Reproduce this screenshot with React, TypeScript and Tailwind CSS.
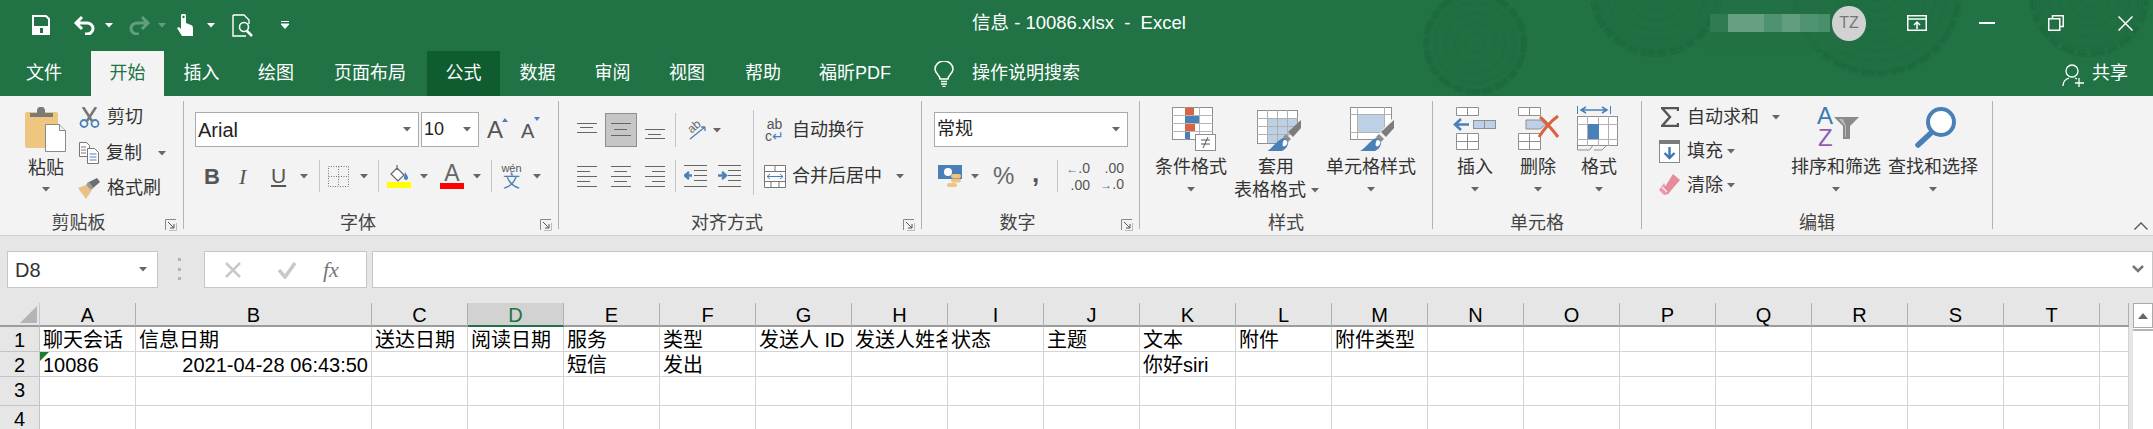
import React from "react";

const UI = "font-['Liberation_Sans','Noto_Sans_CJK_SC',sans-serif]";

function Caret({ className = "" }: { className?: string }) {
  return (
    <svg width="8" height="5" viewBox="0 0 8 5" className={`shrink-0 ${className}`}>
      <path d="M0 0h8L4 4.5z" fill="#666" />
    </svg>
  );
}

function Sep({ className = "" }: { className?: string }) {
  return <div className={`w-px self-stretch bg-[#c6c6c6] shrink-0 ${className}`} />;
}

function Launcher() {
  return (
    <svg width="12" height="12" viewBox="0 0 12 12" className="absolute right-[6px] top-[10px]">
      <path d="M.5 11V.5H11" fill="none" stroke="#888" />
      <path d="M3 3l6 6M9 5v4H5" fill="none" stroke="#555" />
      <path d="M4 11.5h7.5V4" fill="none" stroke="#bbb" />
    </svg>
  );
}

function Group({ w, label, launcher, children }: { w: string; label: string; launcher?: boolean; children: React.ReactNode }) {
  return (
    <div className={`${w} h-[128px] shrink-0 flex flex-col border-r border-[#b4b4b4]`}>
      <div className="h-[108px] flex flex-col">{children}</div>
      <div className={`relative h-[20px] leading-[28px] text-center text-[18px] text-[#444] ${launcher ? "pr-[26px]" : ""}`}>
        {label}
        {launcher && <Launcher />}
      </div>
    </div>
  );
}

function Select({ w, text, size, ml }: { w: string; text: string; size: string; ml: string }) {
  return (
    <div className={`${w} ${ml} h-[35px] bg-white border border-[#ababab] flex items-center justify-between pl-[2px] pr-[7px] shrink-0 ${size} text-[#222]`}>
      <span>{text}</span>
      <Caret />
    </div>
  );
}

function BigBtn({ w, ml = "", icon, lines, iw = "" }: { w: string; ml?: string; icon: React.ReactNode; lines: React.ReactNode; iw?: string }) {
  return (
    <div className={`${w} ${ml} shrink-0 flex flex-col items-center text-[18px] leading-[18px] text-[#333] whitespace-nowrap`}>
      <div className={`mt-[6px] h-[46px] flex items-start justify-center ${iw}`}>{icon}</div>
      <div className="mt-[5px]">{lines}</div>
      <Caret className="mt-[11px]" />
    </div>
  );
}

function Rings({ cx, cy, r }: { cx: number; cy: number; r: number }) {
  const rs = Array.from({ length: Math.floor(r / 5) }, (_, i) => (i + 1) * 5);
  return (
    <g fill="none">
      <circle cx={cx} cy={cy} r={r - 4} fill="#1f6f43" stroke="#1e6a3f" strokeWidth="6" strokeDasharray="9 3 14 4" />
      {rs.map((x) => (
        <circle key={x} cx={cx} cy={cy} r={x} stroke={x % 10 === 0 ? "#1e6b40" : "#207145"} strokeWidth="1" />
      ))}
    </g>
  );
}

function Watermark() {
  return (
    <svg width="2153" height="96" viewBox="0 0 2153 96" className="absolute left-0 top-0">
      <Rings cx={1475} cy={43} r={53} />
      <Rings cx={1656} cy={-10} r={68} />
      <Rings cx={1877} cy={-9} r={87} />
      <Rings cx={2089} cy={-3} r={60} />
      <path d="M1710 0h120l25 22v28h-40l-5 4h-100z" fill="#236f45" opacity="0.6" />
    </svg>
  );
}

function Save() {
  return (
    <svg width="18" height="20" viewBox="0 0 18 20" className="shrink-0">
      <path d="M1 1h13l3 3v15H1z" fill="none" stroke="#fff" strokeWidth="2" />
      <rect x="1" y="11" width="16" height="8" fill="#fff" />
      <rect x="8" y="13" width="3" height="5" fill="#217346" />
    </svg>
  );
}
function Undo() {
  return (
    <svg width="23" height="20" viewBox="0 0 23 20" className="shrink-0">
      <path d="M9 2L3 8l6 6M3 8h11a6 5.5 0 0 1 0 11h-2" fill="none" stroke="#fff" strokeWidth="3" />
    </svg>
  );
}
function Redo() {
  return (
    <svg width="23" height="20" viewBox="0 0 23 20" className="shrink-0 opacity-30">
      <path d="M14 2l6 6-6 6M20 8H9a6 5.5 0 0 0 0 11h2" fill="none" stroke="#fff" strokeWidth="3" />
    </svg>
  );
}
function Touch() {
  return (
    <svg width="16" height="22" viewBox="0 0 16 22" className="shrink-0">
      <path d="M4 2a2.5 2.5 0 0 1 5 0v7l5 2c1.500.600 2 2 2 3v8H5L0 14l2-1 2 2z" fill="#fff" />
      <circle cx="6.500" cy="3" r="1.200" fill="#217346" />
    </svg>
  );
}
function Preview() {
  return (
    <svg width="22" height="23" viewBox="0 0 22 23" className="shrink-0">
      <path d="M1 1h11l5 5v4M1 1v21h13" fill="none" stroke="#fff" strokeWidth="1.400" />
      <circle cx="12" cy="13" r="4.500" fill="none" stroke="#fff" strokeWidth="1.600" />
      <path d="M15 17l5 5" stroke="#fff" strokeWidth="2.500" />
    </svg>
  );
}

function Paste() {
  return (
    <svg width="42" height="46" viewBox="0 0 42 46">
      <rect x="0" y="5" width="33" height="36" rx="2" fill="#eec680" />
      <path d="M5 10V6h7V3a3.500 3.500 0 0 1 4 -3h0a3.500 3.500 0 0 1 4 3v3h8v4z" fill="#7a7a7a" />
      <path d="M20.500 17.500h14l6 6v21h-20z" fill="#fff" stroke="#8a8a8a" />
      <path d="M34.500 17.500v6h6" fill="#eee" stroke="#8a8a8a" />
    </svg>
  );
}
function Scissors() {
  return (
    <svg width="21" height="21" viewBox="0 0 21 21" className="shrink-0">
      <path d="M4 0l9 14M17 0L8 14" stroke="#777" strokeWidth="2.600" fill="none" />
      <circle cx="5" cy="16.500" r="3.500" fill="none" stroke="#4a80b8" strokeWidth="1.800" />
      <circle cx="16" cy="16.500" r="3.500" fill="none" stroke="#4a80b8" strokeWidth="1.800" />
    </svg>
  );
}
function Copy() {
  return (
    <svg width="21" height="22" viewBox="0 0 21 22" className="shrink-0">
      <path d="M.5.5h7l3 3v11H.5z" fill="#fff" stroke="#777" />
      <path d="M8.500 6.500h7l4 4v11h-11z" fill="#fff" stroke="#777" />
      <path d="M2 5h5M2 8h5M2 11h5" stroke="#777" />
      <path d="M10.500 12h7M10.500 15h7M10.500 18h7" stroke="#4a80b8" />
    </svg>
  );
}
function Brush() {
  return (
    <svg width="24" height="21" viewBox="0 0 24 21" className="shrink-0">
      <path d="M0 10l8-3 6 5-6 9z" fill="#e8c088" />
      <path d="M9 5l5 6 8-7-3-4z" fill="#6e6e6e" />
      <path d="M8 7l3-3 4 5-2 3z" fill="#9a9a9a" />
    </svg>
  );
}
function Borders() {
  return (
    <svg width="21" height="21" viewBox="0 0 21 21" className="shrink-0">
      <path d="M.5.5h20v20H.5zM10.500.5v20M.5 10.500h20" fill="none" stroke="#777" strokeDasharray="1 1.500" />
    </svg>
  );
}
function Bucket() {
  return (
    <div className="w-[24px] shrink-0 flex flex-col items-center">
      <svg width="20" height="18" viewBox="0 0 20 18">
        <path d="M8 1v5M8 4l7 7-6 6-7-7z" fill="#fff" stroke="#666" strokeWidth="1.200" />
        <path d="M16 8c2 3 3 4 3 6a2 2 0 0 1-4 0c0-2 .500-3 1-6z" fill="#4a80b8" />
      </svg>
      <div className="w-[24px] h-[6px] bg-[#ffff00]" />
    </div>
  );
}
function HLines({ widths, ys, h = 24, x = [] }: { widths?: number[]; ys: number[]; h?: number; x?: number[] }) {
  return (
    <svg width="20" height={h} viewBox={`0 0 20 ${h}`} className="shrink-0">
      {ys.map((y, i) => (
        <path key={y} d={`M${x[i] ?? 0} ${y + 0.5}H${(x[i] ?? 0) + (widths ? widths[i] : 20)}`} stroke="#666" />
      ))}
    </svg>
  );
}
function Orient() {
  return (
    <svg width="21" height="23" viewBox="0 0 21 23" className="shrink-0 overflow-visible">
      <text x="3" y="12" fontSize="12" fill="#666" transform="rotate(-40 8 10)" fontFamily="Liberation Sans">ab</text>
      <path d="M4 20L19 8M19 8h-4M19 8v4" fill="none" stroke="#4a80b8" strokeWidth="1.300" />
    </svg>
  );
}
function Indent({ inc }: { inc?: boolean }) {
  return (
    <svg width="23" height="23" viewBox="0 0 23 23" className="shrink-0">
      <path d="M0 .5h23M10 5.500h13M10 10.500h13M10 15.500h13M0 21.500h23" stroke="#666" />
      {inc ? (
        <path d="M0 10.500h6M4 7l4 3.500L4 14" fill="none" stroke="#4a80b8" strokeWidth="2.400" />
      ) : (
        <path d="M8 10.500H2M5 7L1 10.500 5 14" fill="none" stroke="#4a80b8" strokeWidth="2.400" />
      )}
    </svg>
  );
}
function Merge() {
  return (
    <svg width="22" height="23" viewBox="0 0 22 23" className="shrink-0">
      <path d="M.5.5h21v22H.5zM.5 6.500h21M.5 16.500h21M11 .5v6M7 16.500v6M15 16.500v6" fill="#fff" stroke="#777" />
      <path d="M3 11.500h16M6 9l-3 2.500L6 14M16 9l3 2.500L16 14" fill="none" stroke="#4a80b8" />
    </svg>
  );
}
function Money() {
  return (
    <svg width="24" height="23" viewBox="0 0 24 23" className="shrink-0">
      <rect x="0" y="0" width="24" height="14" fill="#4a80b8" />
      <circle cx="10" cy="7" r="4" fill="#fff" />
      <rect x="13" y="9" width="10" height="4" rx="2" fill="#eec680" />
      <rect x="13" y="13.500" width="10" height="4" rx="2" fill="#eec680" />
      <rect x="9" y="18" width="10" height="4" rx="2" fill="#eec680" />
    </svg>
  );
}
function DecBox({ up, down, arrowTop, arrowBottom }: { up: string; down: string; arrowTop?: boolean; arrowBottom?: boolean }) {
  return (
    <div className="w-[23px] shrink-0 flex flex-col items-end text-[14px] leading-[16px] text-[#555] whitespace-nowrap">
      <span>
        {arrowTop && <span className="text-[#3d78b4] font-bold text-[12px]">←</span>}
        {up}
      </span>
      <span>
        {arrowBottom && <span className="text-[#3d78b4] font-bold text-[12px]">→</span>}
        {down}
      </span>
    </div>
  );
}
function CondFmt() {
  return (
    <svg width="45" height="45" viewBox="0 0 45 45">
      <rect x=".5" y=".5" width="40" height="32" fill="#fff" stroke="#8f8f8f" />
      <path d="M13.500 0v33M27.500 0v33M0 8.500h41M0 16.500h41M0 24.500h41" stroke="#b5b5b5" />
      <rect x="13" y="1" width="9" height="7" fill="#db6242" />
      <rect x="13" y="9" width="14" height="7" fill="#4a80b8" />
      <rect x="13" y="17" width="10" height="7" fill="#db6242" />
      <rect x="13" y="25" width="5" height="7" fill="#4a80b8" />
      <rect x="23.500" y="27.500" width="20" height="16" fill="#fff" stroke="#8f8f8f" />
      <path d="M29 33h9M29 37h9M36 30l-5 11" stroke="#555" fill="none" />
    </svg>
  );
}
function BrushTip() {
  return (
    <g>
      <path d="M44 10v8l-8 9-5-5z" fill="#7c7c7c" />
      <path d="M29 24l5 5-3 3-5-5z" fill="#8f8f8f" />
      <path d="M26 28c3 0 6 3 5 6-1 4-4 6-6 7H10c5-2 9-10 16-13z" fill="#4a80b8" />
      <path d="M27 30c3 0 4 2 3 4s-3 3-4 2 0-5 1-6z" fill="#fff" />
    </g>
  );
}
function TableFmt() {
  return (
    <svg width="45" height="42" viewBox="0 0 45 42">
      <rect x=".5" y=".5" width="40" height="33" fill="#fff" stroke="#8f8f8f" />
      <rect x="10" y="8" width="30" height="25" fill="#bdd0e6" />
      <path d="M10.500 0v33M20.500 0v33M30.500 0v33M0 8.500h41M0 16.500h41M0 24.500h41" stroke="#b0b0b0" />
      <path d="M46 9L26 33 22 42H46z" fill="#f3f3f3" />
      <BrushTip />
    </svg>
  );
}
function CellFmt() {
  return (
    <svg width="45" height="45" viewBox="0 0 45 45">
      <rect x=".5" y=".5" width="41" height="32" fill="#fff" stroke="#8f8f8f" />
      <rect x="8" y="8" width="26" height="17" fill="#bdd0e6" />
      <path d="M7.500 0v33M34.500 0v33M0 7.500h41M0 25.500h41" stroke="#b0b0b0" />
      <path d="M46 7L26 30 20 45H46z" fill="#f3f3f3" />
      <g transform="translate(0 3)"><BrushTip /></g>
    </svg>
  );
}
function InsertCell() {
  return (
    <svg width="44" height="44" viewBox="0 0 44 44">
      <path d="M3.500.5h22v8h-22zM14.500.5v8M3.500 26.500h22v16h-22zM14.500 26.500v16M3.500 34.500h22" fill="#fff" stroke="#8f8f8f" />
      <rect x="20.500" y="13.500" width="22" height="8" fill="#bdd0e6" stroke="#8f8f8f" />
      <path d="M31.500 13.500v8" stroke="#8f8f8f" />
      <path d="M16 17.500H3M8 12l-6 5.500L8 23" fill="none" stroke="#4a80b8" strokeWidth="2.600" />
    </svg>
  );
}
function DeleteCell() {
  return (
    <svg width="44" height="44" viewBox="0 0 44 44">
      <path d="M2.500.5h22v8h-22zM13.500.5v8M2.500 26.500h22v16h-22zM13.500 26.500v16M2.500 34.500h22" fill="#fff" stroke="#8f8f8f" />
      <path d="M10 13h14l6 4.500-6 4.500H10z" fill="#bdd0e6" stroke="#8f8f8f" />
      <path d="M23 30C28 22 34 15 42 9M24 10c7 6 12 12 18 20" fill="none" stroke="#db6242" strokeWidth="3" />
    </svg>
  );
}
function FormatCell() {
  return (
    <svg width="44" height="47" viewBox="0 0 44 47" className="-mt-[1px]">
      <path d="M.5 0v8M33.500 0v8" stroke="#4a80b8" />
      <path d="M4 4h26M9 1L4 4l5 3M25 1l5 3-5 3" fill="none" stroke="#4a80b8" strokeWidth="1.500" />
      <rect x=".5" y="10.500" width="40" height="29" fill="#fff" stroke="#8f8f8f" />
      <path d="M10.500 10v30M21.500 10v30M31.500 10v30M0 18.500h41M0 33.500h41" stroke="#b0b0b0" />
      <rect x="11" y="18" width="11" height="15" fill="#4a80b8" />
      <path d="M.5 40v4h12l3-4M17 44h8l4-4" fill="none" stroke="#8f8f8f" />
    </svg>
  );
}
function Sigma() {
  return (
    <svg width="18" height="20" viewBox="0 0 18 20" className="shrink-0">
      <path d="M17 4V1H1l8 9-8 9h16v-3" fill="none" stroke="#555" strokeWidth="2.400" />
    </svg>
  );
}
function FillIcon() {
  return (
    <svg width="21" height="23" viewBox="0 0 21 23" className="shrink-0">
      <rect x=".5" y=".5" width="20" height="22" fill="#fff" stroke="#8a8a8a" />
      <rect x="0" y="0" width="21" height="4" fill="#7c7c7c" />
      <path d="M10.500 7v11M5.500 13l5 5 5-5" fill="none" stroke="#3d78b4" strokeWidth="2.400" />
    </svg>
  );
}
function Eraser() {
  return (
    <svg width="21" height="22" viewBox="0 0 21 22" className="shrink-0">
      <path d="M14 0l7 6-12 14-5-4z" fill="#e78a9c" />
      <path d="M5 9L0 16l5 5 5-1z" fill="#e78a9c" opacity=".85" />
      <path d="M3 13l5 5" stroke="#f3f3f3" strokeWidth="1.300" />
    </svg>
  );
}
function SortIcon() {
  return (
    <svg width="43" height="40" viewBox="0 0 43 40" className="overflow-visible">
      <text x="1" y="17" fontSize="24" fill="#3d78b4" fontFamily="Liberation Sans">A</text>
      <text x="2" y="39" fontSize="24" fill="#8e5fb5" fontFamily="Liberation Sans">Z</text>
      <path d="M18 10h25l-9 9v13h-7V19z" fill="#8a8a8a" />
      <path d="M23 12h4l3 7v11h-1V19z" fill="#bbb" />
    </svg>
  );
}
function Finder() {
  return (
    <svg width="42" height="41" viewBox="0 0 42 41">
      <circle cx="26" cy="15" r="13" fill="#fff" stroke="#4a80b8" strokeWidth="4" />
      <path d="M16 26L3 38" stroke="#4a80b8" strokeWidth="5.500" strokeLinecap="round" />
    </svg>
  );
}

const COLS = ["A","B","C","D","E","F","G","H","I","J","K","L","M","N","O","P","Q","R","S","T",""];
const RH = ["h-[25px]", "h-[25px]", "h-[29px]", "h-[29px]"];
const DATA: Record<string, string>[] = [
  { A:"聊天会话", B:"信息日期", C:"送达日期", D:"阅读日期", E:"服务", F:"类型", G:"发送人 ID", H:"发送人姓名", I:"状态", J:"主题", K:"文本", L:"附件", M:"附件类型" },
  { A:"10086", B:"2021-04-28 06:43:50", E:"短信", F:"发出", K:"你好siri" },
  {},
  {},
];

function Sheet() {
  return (
    <div className="grid grid-cols-[40px_96px_236px_repeat(18,96px)_29px] flex-1 text-[20px] text-black">
      <div className="h-[24px] bg-[#e6e6e6] border-b-2 border-[#9c9c9c] flex items-end justify-end border-r border-r-[#c8c8c8]">
        <svg width="17" height="17" viewBox="0 0 17 17" className="mb-[2px] mr-[2px]"><path d="M17 0v17H0z" fill="#b4b4b4" /></svg>
      </div>
      {COLS.map((c) =>
        c === "D" ? (
          <div key="D" className="h-[24px] bg-[#d2d2d2] border-b-2 border-[#217346] text-[#217346] text-center leading-[24px] border-r border-r-[#b0b0b0]">{c}</div>
        ) : (
          <div key={c || "end"} className="h-[24px] bg-[#e6e6e6] border-b-2 border-[#9c9c9c] text-center leading-[24px] border-r border-r-[#b0b0b0]">{c}</div>
        )
      )}
      {DATA.map((row, r) => (
        <React.Fragment key={r}>
          <div className={`${RH[r]} bg-[#e6e6e6] text-center border-b border-r border-[#c4c4c4] leading-[27px]`}>{r + 1}</div>
          {COLS.map((c) => (
            <div
              key={c || "end"}
              className={`${RH[r]} relative bg-white border-b border-r border-[#d4d4d4] overflow-hidden whitespace-nowrap leading-[27px] px-[3px] ${c === "B" && r === 1 ? "text-right" : ""}`}
            >
              {c === "A" && r === 1 && (
                <svg width="9" height="9" viewBox="0 0 9 9" className="absolute left-0 top-0"><path d="M0 0h9L0 9z" fill="#1e7a2e" /></svg>
              )}
              {row[c] ?? ""}
            </div>
          ))}
        </React.Fragment>
      ))}
    </div>
  );
}

export default function App() {
  return (
    <div className={`w-[2153px] h-[429px] overflow-hidden bg-[#e6e6e6] ${UI}`}>
      <header className="relative h-[96px] bg-[#217346] text-white">
        <Watermark />
        <div className="relative h-[51px] pb-[5px] flex items-center text-[18px] pr-[20px]">
          <div className="flex items-center h-[30px] mt-[4px]">
            <div className="ml-[32px]"><Save /></div>
            <div className="ml-[23px]"><Undo /></div>
            <Caret className="ml-[9px] [&>path]:fill-white" />
            <div className="ml-[15px]"><Redo /></div>
            <Caret className="ml-[7px] opacity-30 [&>path]:fill-white" />
            <div className="ml-[11px]"><Touch /></div>
            <Caret className="ml-[14px] [&>path]:fill-white" />
            <div className="ml-[17px]"><Preview /></div>
            <svg width="8" height="8" viewBox="0 0 8 8" className="ml-[27px] shrink-0"><path d="M0 .5h8M0 3h8L4 7.500z" stroke="#fff" fill="#fff" strokeWidth="1" /></svg>
          </div>
          <div className="ml-[683px] whitespace-pre text-[18.5px]">信息 - 10086.xlsx  -  Excel</div>
          <div className="ml-auto flex items-center">
            <div className="flex h-[18px]">
              <div className="w-[18px] bg-[#2f7c53]" />
              <div className="w-[36px] bg-[#66a081]" />
              <div className="w-[18px] bg-[#4f9270]" />
              <div className="w-[18px] bg-[#629d7e]" />
              <div className="w-[18px] bg-[#4f9370]" />
              <div className="w-[12px] bg-[#4a8f6c]" />
            </div>
            <div className="w-[34px] h-[35px] rounded-full bg-[#d2d2d2] ml-[2px] text-[#777] text-[16px] flex items-center justify-center">TZ</div>
            <svg width="20" height="16" viewBox="0 0 20 16" className="ml-[41px] shrink-0">
              <path d="M.75.75h18.500v14.500H.75zM0 4h20" fill="none" stroke="#fff" strokeWidth="1.500" />
              <path d="M10 14V7M7 10l3-3 3 3" fill="none" stroke="#fff" strokeWidth="1.500" />
            </svg>
            <div className="ml-[52px] w-[16px] h-[2px] bg-white" />
            <svg width="16" height="16" viewBox="0 0 16 16" className="ml-[53px] shrink-0">
              <path d="M4.500 3V.75h10.750V11.500H12" fill="none" stroke="#fff" strokeWidth="1.500" />
              <rect x=".75" y="3.750" width="11" height="11.500" fill="none" stroke="#fff" strokeWidth="1.500" />
            </svg>
            <svg width="15" height="15" viewBox="0 0 15 15" className="ml-[54px] shrink-0">
              <path d="M.5.5l14 14M14.500.5l-14 14" stroke="#fff" strokeWidth="1.500" />
            </svg>
          </div>
        </div>
        <nav className="relative h-[45px] flex items-center text-[18px] pr-[25px]">
          <div className="ml-[7px] w-[74px] text-center">文件</div>
          <div className="ml-[10px] w-[73px] h-full bg-[#f3f3f3] text-[#217346] flex items-center justify-center">开始</div>
          <div className="w-[75px] text-center">插入</div>
          <div className="w-[74px] text-center">绘图</div>
          <div className="ml-[2px] w-[110px] text-center">页面布局</div>
          <div className="ml-[2px] w-[73px] h-full bg-[#0e5c2f] flex items-center justify-center">公式</div>
          <div className="w-[75px] text-center">数据</div>
          <div className="w-[75px] text-center">审阅</div>
          <div className="w-[74px] text-center">视图</div>
          <div className="ml-[2px] w-[74px] text-center">帮助</div>
          <div className="w-[110px] text-center">福昕PDF</div>
          <svg width="20" height="26" viewBox="0 0 20 26" className="ml-[24px] shrink-0">
            <path d="M6 18c0-4-5-5-5-10a9 8 0 0 1 18 0c0 5-5 6-5 10z" fill="none" stroke="#fff" strokeWidth="1.500" />
            <path d="M7 20.500h6M7 23h6M8.500 25.500h3" stroke="#fff" strokeWidth="1.500" />
          </svg>
          <div className="ml-[18px]">操作说明搜索</div>
          <div className="ml-auto flex items-center">
            <svg width="23" height="24" viewBox="0 0 23 24" className="shrink-0 mt-[5px]">
              <circle cx="10" cy="7" r="6" fill="none" stroke="#fff" strokeWidth="1.300" />
              <path d="M1 22c0-5 3-7 6-8M13 14l2 1M17 14v9M13 19h9" fill="none" stroke="#fff" strokeWidth="1.300" />
            </svg>
            <div className="ml-[7px]">共享</div>
          </div>
        </nav>
      </header>

      <section className="relative h-[140px] bg-[#f3f3f3] border-b border-[#d0d0d0] pt-[5px] flex text-[18px] text-[#333]">
        <Group w="w-[184px]" label="剪贴板" launcher>
          <div className="flex leading-[18px]">
            <div className="ml-[24px] w-[44px] flex flex-col items-center">
              <div className="mt-[6px] h-[46px]"><Paste /></div>
              <div className="mt-[6px]">粘贴</div>
              <Caret className="mt-[10px]" />
            </div>
            <div className="ml-[11px] flex flex-col">
              <div className="h-[32px] flex items-center"><Scissors /><span className="ml-[7px]">剪切</span></div>
              <div className="h-[40px] flex items-center"><Copy /><span className="ml-[6px]">复制</span><Caret className="ml-[16px]" /></div>
              <div className="h-[30px] flex items-center -ml-[1px]"><Brush /><span className="ml-[5px]">格式刷</span></div>
            </div>
          </div>
        </Group>

        <Group w="w-[375px]" label="字体" launcher>
          <div className="mt-[11px] h-[35px] flex items-center">
            <Select ml="ml-[11px]" w="w-[224px]" text="Arial" size="text-[20px]" />
            <Select ml="ml-[2px]" w="w-[58px]" text="10" size="text-[18px]" />
            <div className="ml-[8px] w-[20px] flex items-start text-[#555]">
              <span className="text-[24px] leading-[24px]">A</span>
              <svg width="6" height="4" viewBox="0 0 6 4" className="-ml-[1px] shrink-0"><path d="M3 0l3 4H0z" fill="#4a80b8" /></svg>
            </div>
            <div className="ml-[14px] w-[20px] flex items-start text-[#555]">
              <span className="text-[20px] leading-[24px] mt-[2px]">A</span>
              <svg width="6" height="4" viewBox="0 0 6 4" className="shrink-0"><path d="M0 0h6L3 4z" fill="#4a80b8" /></svg>
            </div>
          </div>
          <div className="mt-[13px] h-[32px] flex items-center text-[#555]">
            <span className="ml-[20px] w-[14px] text-[22px] font-bold">B</span>
            <span className="ml-[21px] w-[11px] text-[22px] italic font-['Liberation_Serif',serif]">I</span>
            <span className="ml-[21px] w-[15px] text-[21px] underline underline-offset-2">U</span>
            <Caret className="ml-[14px]" />
            <Sep className="ml-[11px]" />
            <div className="ml-[8px]"><Borders /></div>
            <Caret className="ml-[11px]" />
            <Sep className="ml-[10px]" />
            <div className="ml-[8px]"><Bucket /></div>
            <Caret className="ml-[9px]" />
            <div className="ml-[12px] w-[24px] flex flex-col items-center text-[#666]">
              <span className="text-[23px] leading-[19px]">A</span>
              <div className="w-[24px] h-[6px] bg-[#ff0000]" />
            </div>
            <Caret className="ml-[9px]" />
            <Sep className="ml-[10px]" />
            <div className="ml-[9px] w-[21px] flex flex-col items-center">
              <span className="text-[11px] leading-[10px] text-[#555]">wén</span>
              <span className="text-[17px] leading-[17px] text-[#4a80b8]">文</span>
            </div>
            <Caret className="ml-[11px]" />
          </div>
        </Group>

        <Group w="w-[363px]" label="对齐方式" launcher>
          <div className="flex">
            <div className="w-[194px] shrink-0">
              <div className="mt-[12px] h-[34px] flex items-center">
                <div className="ml-[18px]"><HLines ys={[5,9,14]} h={24} widths={[20,13,20]} x={[0,3,0]} /></div>
                <div className="ml-[8px] w-[32px] h-[34px] bg-[#c6c6c6] border border-[#8f8f8f] flex items-center justify-center"><HLines ys={[5,11,17]} h={24} widths={[20,13,20]} x={[0,3,0]} /></div>
                <div className="ml-[8px]"><HLines ys={[11,16,20]} h={24} widths={[20,13,20]} x={[0,3,0]} /></div>
                <Sep className="ml-[10px]" />
                <div className="ml-[10px]"><Orient /></div>
                <Caret className="ml-[6px]" />
              </div>
              <div className="mt-[13px] h-[32px] flex items-center">
                <div className="ml-[18px]"><HLines ys={[1,6,11,16,21]} h={23} widths={[20,13,20,13,20]} /></div>
                <div className="ml-[14px]"><HLines ys={[1,6,11,16,21]} h={23} widths={[20,13,20,13,20]} x={[0,3,0,3,0]} /></div>
                <div className="ml-[14px]"><HLines ys={[1,6,11,16,21]} h={23} widths={[20,13,20,13,20]} x={[0,7,0,7,0]} /></div>
                <Sep className="ml-[10px]" />
                <div className="ml-[8px]"><Indent /></div>
                <div className="ml-[11px]"><Indent inc /></div>
              </div>
            </div>
            <Sep className="mt-[9px] h-[85px] self-start" />
            <div className="flex-1">
              <div className="mt-[12px] h-[34px] flex items-center">
                <div className="ml-[12px] w-[17px] flex flex-col items-center text-[14px] leading-[12px] text-[#555]">
                  <span>ab</span>
                  <span>c<span className="text-[#4a80b8]">↵</span></span>
                </div>
                <span className="ml-[9px]">自动换行</span>
              </div>
              <div className="mt-[13px] h-[32px] flex items-center">
                <div className="ml-[10px]"><Merge /></div>
                <span className="ml-[6px]">合并后居中</span>
                <Caret className="ml-[14px]" />
              </div>
            </div>
          </div>
        </Group>

        <Group w="w-[218px]" label="数字" launcher>
          <div className="mt-[11px] h-[35px] flex items-center">
            <Select ml="ml-[12px]" w="w-[194px]" text="常规" size="text-[18px]" />
          </div>
          <div className="mt-[13px] h-[32px] flex items-center">
            <div className="ml-[16px]"><Money /></div>
            <Caret className="ml-[9px]" />
            <span className="ml-[14px] w-[19px] text-[24px] text-[#666] leading-none">%</span>
            <span className="ml-[20px] w-[9px] text-[26px] font-bold text-[#555] leading-none -mt-[6px]">,</span>
            <Sep className="ml-[16px]" />
            <div className="ml-[9px]"><DecBox up=".0" down=".00" arrowTop /></div>
            <div className="ml-[11px]"><DecBox up=".00" down=".0" arrowBottom /></div>
          </div>
        </Group>

        <Group w="w-[293px]" label="样式">
          <div className="flex">
            <BigBtn ml="ml-[15px]" w="w-[72px]" iw="pl-[6px]" icon={<CondFmt />} lines="条件格式" />
            <div className="ml-[7px] w-[85px] shrink-0 flex flex-col text-[18px] leading-[18px] text-[#333] whitespace-nowrap">
              <div className="mt-[9px] h-[43px] pl-[23px]"><TableFmt /></div>
              <div className="mt-[5px] pl-[24px]">套用</div>
              <div className="mt-[5px] flex items-center">表格格式<Caret className="ml-[5px]" /></div>
            </div>
            <BigBtn ml="ml-[7px]" w="w-[90px]" iw="pl-[2px]" icon={<CellFmt />} lines="单元格样式" />
          </div>
        </Group>

        <Group w="w-[209px]" label="单元格">
          <div className="flex">
            <BigBtn ml="ml-[20px]" w="w-[44px]" icon={<InsertCell />} lines="插入" />
            <BigBtn ml="ml-[19px]" w="w-[44px]" icon={<DeleteCell />} lines="删除" />
            <BigBtn ml="ml-[17px]" w="w-[44px]" icon={<FormatCell />} lines="格式" />
          </div>
        </Group>

        <Group w="w-[351px]" label="编辑">
          <div className="flex">
            <div className="w-[148px] shrink-0 flex flex-col leading-[18px]">
              <div className="h-[32px] flex items-center"><div className="ml-[19px]"><Sigma /></div><span className="ml-[8px]">自动求和</span><Caret className="ml-[13px]" /></div>
              <div className="h-[36px] flex items-center"><div className="ml-[17px]"><FillIcon /></div><span className="ml-[7px]">填充</span><Caret className="ml-[4px]" /></div>
              <div className="h-[32px] flex items-center"><div className="ml-[17px]"><Eraser /></div><span className="ml-[7px]">清除</span><Caret className="ml-[4px]" /></div>
            </div>
            <BigBtn w="w-[92px]" iw="pl-[2px]" icon={<SortIcon />} lines="排序和筛选" />
            <BigBtn ml="ml-[5px]" w="w-[92px]" iw="pl-[6px]" icon={<Finder />} lines="查找和选择" />
          </div>
        </Group>

        <svg width="14" height="8" viewBox="0 0 14 8" className="absolute left-[2134px] top-[126px]">
          <path d="M.5 7.500L7 1l6.500 6.500" fill="none" stroke="#555" strokeWidth="1.300" />
        </svg>
      </section>

      <div className="h-[67px] flex items-start pt-[15px]">
        <div className="ml-[7px] w-[151px] h-[37px] bg-white border border-[#c6c6c6] flex items-center justify-between pl-[7px] pr-[10px] text-[20px] text-[#333]">
          <span>D8</span>
          <Caret />
        </div>
        <div className="ml-[20px] w-[3px] h-[22px] mt-[7px] flex flex-col justify-between">
          <div className="h-[3px] bg-[#b4b4b4]" />
          <div className="h-[3px] bg-[#b4b4b4]" />
          <div className="h-[3px] bg-[#b4b4b4]" />
        </div>
        <div className="ml-[23px] w-[163px] h-[37px] bg-white border border-[#c6c6c6] flex items-center">
          <svg width="18" height="18" viewBox="0 0 18 18" className="ml-[19px] shrink-0"><path d="M2 2l14 14M16 2L2 16" stroke="#c8c8c8" strokeWidth="2.500" /></svg>
          <svg width="20" height="18" viewBox="0 0 20 18" className="ml-[35px] shrink-0"><path d="M2 9l6 7L18 2" fill="none" stroke="#c8c8c8" strokeWidth="3.500" /></svg>
          <span className="ml-[26px] text-[22px] italic text-[#777] font-['Liberation_Serif',serif]">fx</span>
        </div>
        <div className="ml-[5px] w-[1781px] h-[37px] bg-white border border-[#c6c6c6] flex items-center justify-end pr-[8px]">
          <svg width="12" height="9" viewBox="0 0 12 9"><path d="M1 1l5 5 5-5" fill="none" stroke="#777" strokeWidth="2.500" /></svg>
        </div>
      </div>

      <div className="flex items-start">
        <Sheet />
        <div className="w-[24px] shrink-0 pl-[4px] h-[126px] bg-[#e6e6e6]">
          <div className="bg-white h-full flex flex-col">
            <div className="h-[25px] border border-[#ababab] flex items-center justify-center">
              <svg width="10" height="6" viewBox="0 0 10 6"><path d="M5 0l5 6H0z" fill="#666" /></svg>
            </div>
            <div className="h-[2px] mt-[1px] bg-[#b4b4b4]" />
          </div>
        </div>
      </div>
    </div>
  );
}
